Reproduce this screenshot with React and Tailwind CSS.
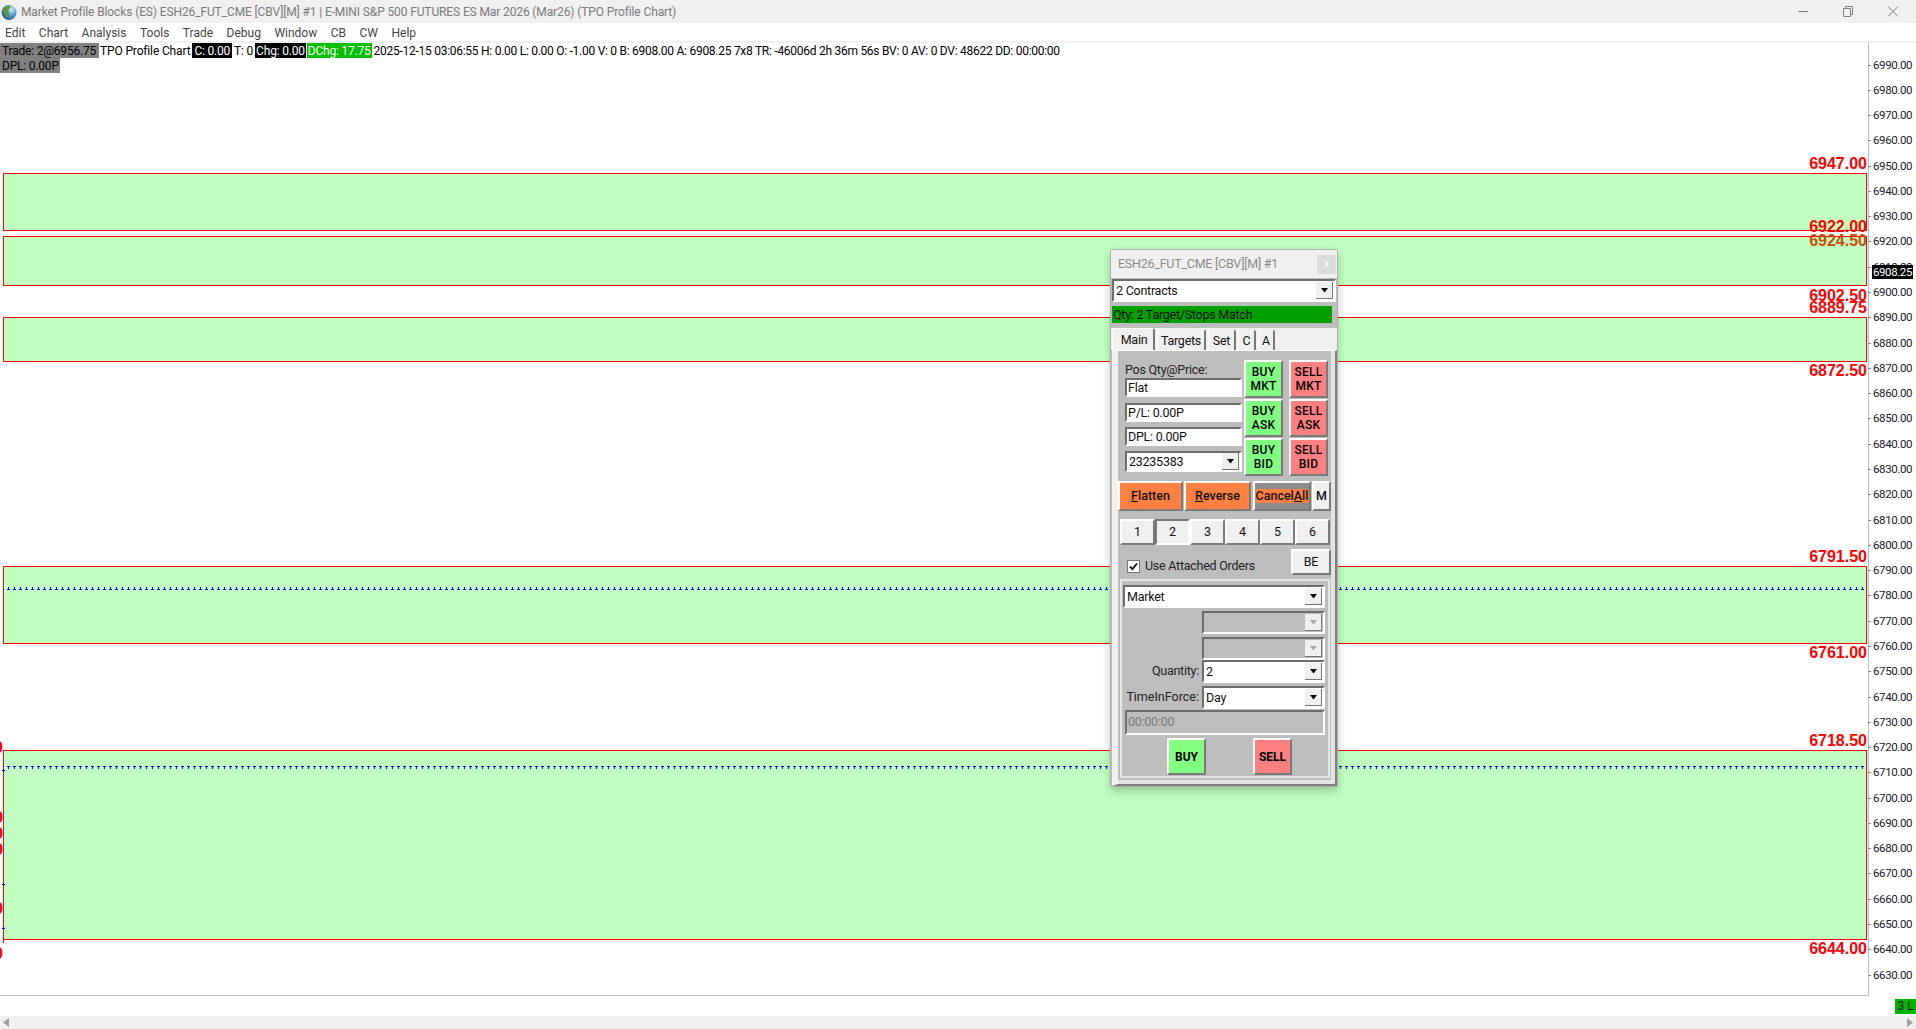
import { Fragment } from 'react'

const menus = ['Edit', 'Chart', 'Analysis', 'Tools', 'Trade', 'Debug', 'Window', 'CB', 'CW', 'Help']

const zones = [
  [173, 230],
  [236, 285],
  [317, 361],
  [566, 643],
  [750, 939],
]

const priceLabels = [
  ['6947.00', 163, '#ff0000'],
  ['6924.50', 239.5, '#c8500c'],
  ['6922.00', 226, '#ff0000'],
  ['6902.50', 294.5, '#ff0000'],
  ['6889.75', 307, '#ff0000'],
  ['6872.50', 370, '#ff0000'],
  ['6791.50', 556, '#ff0000'],
  ['6761.00', 652, '#ff0000'],
  ['6718.50', 740, '#ff0000'],
  ['6644.00', 948, '#ff0000'],
]

const clippedLabels = [747, 817, 833, 849, 908, 953]

const axisTicks = Array.from({ length: 37 }, (_, i) => ({
  label: (6990 - i * 10).toFixed(2),
  y: 64.5 + i * 25.28,
}))

const raised = 'border-2 border-t-white border-l-white border-r-[#7a7a7a] border-b-[#7a7a7a]'
const sunken = 'border-2 border-t-[#6e6e6e] border-l-[#6e6e6e] border-r-white border-b-white'
const uiFont = "font-['Roboto',sans-serif]"

function TradeButton({ top, bottom, color }) {
  return (
    <button className={`${raised} ${color} h-[38px] w-[39px] flex flex-col items-center justify-center text-[12px] leading-[14px] font-medium text-black tracking-[0.2px]`}>
      <span>{top}</span>
      <span>{bottom}</span>
    </button>
  )
}

function Field({ children, className = '' }) {
  return (
    <div className={`${sunken} bg-white flex items-center pl-[1px] pt-[1px] text-[#111] ${className}`}>
      {children}
    </div>
  )
}

function Arrow({ disabled }) {
  return (
    <span className="w-[17px] h-[17px] bg-[#f0f0f0] border-r border-b border-[#777] shrink-0 flex items-center justify-center">
      <svg width="9" height="5" viewBox="0 0 9 5">
        <path d="M1 0h7L4.500 4.500z" fill={disabled ? '#a8a8a8' : '#000'} />
      </svg>
    </span>
  )
}

function Combo({ value, className = '', disabled }) {
  return (
    <div className={`${sunken} ${disabled ? 'bg-[#bdbdbd]' : 'bg-white'} flex items-center justify-between pl-[2px] pr-[1px] text-[#111] ${className}`}>
      <span className="pt-[2px]">{value}</span>
      <Arrow disabled={disabled} />
    </div>
  )
}

function TradeWindow() {
  return (
    <div className={`${uiFont} absolute left-[1110px] top-[249px] w-[228px] h-[538px] rounded-[2px] border border-[#b0b0b0] bg-[#bdbdbd] flex flex-col text-[12.5px] tracking-[-0.25px] shadow-[0_4px_10px_rgba(0,0,0,0.22)]`}>
      <div className="h-[28px] bg-[#f0f0f0] flex items-center justify-between pl-[7px] pr-[1px] shrink-0">
        <span className="text-[#8a8a8a]">ESH26_FUT_CME [CBV][M] #1</span>
        <span className="w-[19px] h-[19px] bg-[#dcdcdc] text-white text-[11px] flex items-center justify-center">x</span>
      </div>

      <Combo value="2 Contracts" className="ml-[1px] mt-[1px] w-[224px] h-[23px] shrink-0" />
      <div className="ml-[1px] mt-[4px] w-[220px] h-[17px] bg-[#00a000] text-[#0a0a0a] flex items-center pl-[1px] pt-[1px] shrink-0">
        Qty: 2 Target/Stops Match
      </div>

      <div className="mt-[5px] h-[22px] bg-[#f0f0f0] flex items-end pl-[1px] gap-[2px] text-[#111] shrink-0">
        <span className="w-[43px] h-[22px] rounded-t-[2px] bg-[#f0f0f0] border-t border-l border-white border-r-2 border-r-[#777] flex items-start justify-center pt-[2px] pl-[2px] relative z-10">Main</span>
        <span className="w-[49px] h-[20px] rounded-t-[2px] bg-[#f0f0f0] border-r-2 border-r-[#777] border-l border-l-white flex items-center justify-center pt-[2px]">Targets</span>
        <span className="w-[28px] h-[20px] rounded-t-[2px] bg-[#f0f0f0] border-r-2 border-r-[#777] border-l border-l-white flex items-center justify-center pt-[2px]">Set</span>
        <span className="w-[18px] h-[20px] rounded-t-[2px] bg-[#f0f0f0] border-r-2 border-r-[#777] border-l border-l-white flex items-center justify-center pt-[2px]">C</span>
        <span className="w-[17px] h-[20px] rounded-t-[2px] bg-[#f0f0f0] border-r-2 border-r-[#777] border-l border-l-white flex items-center justify-center pt-[2px]">A</span>
      </div>

      <div className="ml-[1px] w-[225px] h-[436px] border-l-[6px] border-t border-l-[#f0f0f0] border-t-white border-r-2 border-r-[#7e7e7e] border-b-2 border-b-[#7e7e7e] shadow-[inset_-4px_-4px_0_#e4e4e4] flex flex-col text-[#111]">
        <div className="flex mt-[9px] ml-[7px]">
          <div className="w-[117px] flex flex-col">
            <span className="h-[18px] leading-[20px] text-[#222]">Pos Qty@Price:</span>
            <Field className="h-[19px]">Flat</Field>
            <Field className="h-[19px] mt-[6px]">P/L: 0.00P</Field>
            <Field className="h-[19px] mt-[5px]">DPL: 0.00P</Field>
            <Combo value="23235383" className="h-[21px] mt-[5px]" />
          </div>
          <div className="ml-[2px] flex flex-col gap-[1px]">
            <TradeButton top="BUY" bottom="MKT" color="bg-[#80ff80]" />
            <TradeButton top="BUY" bottom="ASK" color="bg-[#80ff80]" />
            <TradeButton top="BUY" bottom="BID" color="bg-[#80ff80]" />
          </div>
          <div className="ml-[6px] flex flex-col gap-[1px]">
            <TradeButton top="SELL" bottom="MKT" color="bg-[#ff8080]" />
            <TradeButton top="SELL" bottom="ASK" color="bg-[#ff8080]" />
            <TradeButton top="SELL" bottom="BID" color="bg-[#ff8080]" />
          </div>
        </div>

        <div className="mt-[5px] h-[30px] flex text-[12.5px] tracking-normal font-medium text-[#111]">
          <button className={`${raised} w-[65px] bg-[#ff8040]`}><u>F</u>latten</button>
          <button className={`${raised} w-[67px] ml-[1px] bg-[#ff8040]`}><u>R</u>everse</button>
          <button className="ml-[2px] w-[58px] bg-[#8c8c8c] border-2 border-t-white border-l-white border-r-[#7a7a7a] border-b-[#7a7a7a] flex items-center justify-center">
            <span className="bg-[#ff8040] px-[1px] leading-[14px]">Cancel<u>A</u>ll</span>
          </button>
          <button className={`${raised} w-[19px] ml-[1px] bg-[#f0f0f0]`}>M</button>
        </div>

        <div className="mt-[8px] ml-[2px] w-[210px] h-[26px] grid grid-cols-6">
          {['1', '2', '3', '4', '5', '6'].map((n) => (
            <button
              key={n}
              className={
                n === '2'
                  ? 'bg-[#f0f0f0] border-2 border-t-[#777] border-l-[#777] border-r-white border-b-white'
                  : `${raised} bg-[#f0f0f0]`
              }
            >
              {n}
            </button>
          ))}
        </div>

        <div className="mt-[4px] h-[26px] flex items-center ml-[9px]">
          <span className="w-[13px] h-[13px] bg-white border border-[#777] flex items-center justify-center mt-[8px]">
            <svg width="9" height="9" viewBox="0 0 9 9">
              <path d="M1 4.500l2.400 2.600L8 1.500" fill="none" stroke="#000" strokeWidth="1.700" />
            </svg>
          </span>
          <span className="ml-[5px] mt-[8px] text-[#222]">Use Attached Orders</span>
          <button className={`${raised} ml-auto mr-[4px] w-[40px] h-[26px] shrink-0 pt-[1px] bg-[#f0f0f0]`}>BE</button>
        </div>

        <div className="mt-[4px] ml-[2px] w-[210px] h-[199px] border-2 border-[#e6e6e6] flex flex-col">
          <Combo value="Market" className="mt-[4px] ml-[1px] w-[202px] h-[23px] shrink-0" />
          <Combo disabled value="" className="mt-[3px] ml-[80px] w-[123px] h-[23px] shrink-0" />
          <Combo disabled value="" className="mt-[3px] ml-[80px] w-[123px] h-[23px] shrink-0" />
          <div className="flex items-center h-[23px] shrink-0">
            <span className="w-[77px] text-right text-[#222]">Quantity:</span>
            <Combo value="2" className="ml-[3px] w-[123px] h-[23px]" />
          </div>
          <div className="mt-[3px] flex items-center h-[23px] shrink-0">
            <span className="w-[77px] text-right text-[#222] tracking-normal">TimeInForce:</span>
            <Combo value="Day" className="ml-[3px] w-[123px] h-[23px]" />
          </div>
          <div className={`${sunken} mt-[1px] ml-[3px] w-[200px] h-[25px] shrink-0 flex items-center pl-[1px] text-[#7a7a7a]`}>00:00:00</div>
          <div className="mt-[3px] flex text-[12px] tracking-normal font-bold text-black">
            <button className={`${raised} ml-[45px] w-[39px] h-[37px] bg-[#80ff80]`}>BUY</button>
            <button className={`${raised} ml-[47px] w-[39px] h-[37px] bg-[#ff8080]`}>SELL</button>
          </div>
        </div>
      </div>
    </div>
  )
}

function ChartDrawing() {
  return (
    <svg className="absolute inset-0 font-['Liberation_Sans',sans-serif]" width="1916" height="986" viewBox="0 43 1916 986">
      <defs>
        <pattern id="tpoDots" x="1" y="0" width="6" height="3" patternUnits="userSpaceOnUse">
          <path d="M0 1h3v1H0zM1 0h1v3H1z" fill="#0000ff" />
        </pattern>
      </defs>

      {clippedLabels.map((y) => (
        <text key={y} x="3" y={y + 6} textAnchor="end" fontSize="16" fontWeight="700" fill="#ff0000">00</text>
      ))}

      {zones.map(([top, bottom]) => (
        <rect key={top} x="3.500" y={top + 0.5} width="1863" height={bottom - top} fill="#c0ffc0" stroke="#ff0000" />
      ))}

      {priceLabels.map(([text, y, color]) => (
        <text key={text} x="1867" y={y + 6} textAnchor="end" fontSize="16" fontWeight="700" fill={color}>{text}</text>
      ))}

      <path d="M3.500 750v193" stroke="#ff0000" fill="none" />
      <rect x="3" y="587" width="1864" height="3" fill="url(#tpoDots)" />
      <rect x="3" y="766" width="1864" height="3" fill="url(#tpoDots)" />
      <path d="M2 770.500h3M3.500 769v3M2 884.500h3M3.500 883v3M2 928.500h3M3.500 927v3" stroke="#0000ff" fill="none" />

      <path d="M1868.500 43v953M0 995.500h1868" stroke="#bdbdbd" fill="none" />

      {axisTicks.map(({ label, y }) => (
        <Fragment key={label}>
          <path d={`M1868 ${Math.round(y) + 0.5}h3`} stroke="#888" />
          <text x="1873" y={Math.round(y) + 3.5} fontSize="11.5" letterSpacing="-0.4" fontFamily="Roboto, sans-serif" fill="#1a1a2a">{label}</text>
        </Fragment>
      ))}
    </svg>
  )
}

export default function App() {
  return (
    <div className="relative w-[1916px] h-[1029px] overflow-hidden bg-white flex flex-col font-['Roboto',sans-serif]">
      <div className="h-[23px] bg-[#f0f0f0] flex items-center pl-[1px] shrink-0">
        <svg width="18" height="18" viewBox="0 0 18 18" className="shrink-0">
          <defs>
            <radialGradient id="globe" cx="0.65" cy="0.3" r="0.8">
              <stop offset="0" stopColor="#d8f0ff" />
              <stop offset="0.45" stopColor="#5a9ed8" />
              <stop offset="1" stopColor="#1c4a7a" />
            </radialGradient>
          </defs>
          <circle cx="8" cy="9.500" r="7.500" fill="url(#globe)" />
          <path d="M2 6c2-3 5-4 7-3 1 2-1 3-2 4 1 2 2 4 0 7-2 1-3-2-3-4-1-1-2-2-2-4z" fill="#5c9a2e" />
        </svg>
        <span className="ml-[2px] text-[12px] tracking-[-0.12px] text-[#7a7a7a] whitespace-nowrap">
          Market Profile Blocks (ES) ESH26_FUT_CME [CBV][M] #1 | E-MINI S&amp;P 500 FUTURES ES Mar 2026 (Mar26) (TPO Profile Chart)
        </span>
        <div className="ml-auto flex items-center gap-[35px] pr-[18px]">
          <svg width="10" height="11" viewBox="0 0 10 11"><path d="M0 5.500h10" stroke="#808080" /></svg>
          <svg width="10" height="11" viewBox="0 0 10 11"><path d="M0.500 2.500h7v8h-7zM2.500 2.500v-2h7v8h-2" stroke="#808080" fill="none" /></svg>
          <svg width="10" height="11" viewBox="0 0 10 11"><path d="M0 0.500l10 10M10 0.500L0 10.500" stroke="#808080" /></svg>
        </div>
      </div>

      <div className="h-[19px] flex items-center pt-[2px] pl-[5px] gap-[13.500px] text-[12px] text-[#444] shrink-0 border-b border-[#f0f0f0]">
        {menus.map((m) => <span key={m}>{m}</span>)}
      </div>
      <div className="h-[1px] bg-[#f0f0f0] shrink-0" />

      <div className="relative flex-1">
        <ChartDrawing />
        <div className="absolute left-0 top-0 flex flex-col items-start text-[12px] leading-[17px] text-black whitespace-nowrap">
          <div className="flex h-[15px]">
            <span className="bg-[#808080] pl-[2px] pr-[3px] tracking-[-0.2px]">Trade: 2@6956.75</span>
            <span className="ml-[1px] mr-[2px] tracking-[-0.15px]">TPO Profile Chart</span>
            <span className="bg-black text-white px-[2px] tracking-[-0.2px]">C: 0.00</span>
            <span className="mx-[2px] tracking-[-0.2px]">T: 0</span>
            <span className="bg-black text-white px-[1px] tracking-[-0.2px]">Chg: 0.00</span>
            <span className="ml-[1px] bg-[#00c000] text-white px-[1px] tracking-[-0.2px]">DChg: 17.75</span>
            <span className="ml-[2px] tracking-[-0.27px]">2025-12-15 03:06:55 H: 0.00 L: 0.00 O: -1.00 V: 0 B: 6908.00 A: 6908.25 7x8 TR: -46006d 2h 36m 56s BV: 0 AV: 0 DV: 48622 DD: 00:00:00</span>
          </div>
          <span className="h-[15px] bg-[#808080] pl-[2px] pr-[1px] tracking-[-0.2px]">DPL: 0.00P</span>
        </div>
        <div className="absolute left-[1872px] top-[222px] w-[41px] h-[14px] bg-black text-white text-[11.500px] leading-[15px] tracking-[-0.4px] text-center">6908.25</div>
      </div>

      <div className="h-[20px] shrink-0 flex justify-end items-start pt-[3px]">
        <span className="w-[21px] h-[15px] bg-[#00b400] text-[12px] leading-[15px] text-center text-[#111]">3 L</span>
      </div>

      <div className="h-[13px] bg-[#f0f0f0] shrink-0 flex items-center justify-between px-[3px]">
        <svg width="7" height="9" viewBox="0 0 7 9"><path d="M6 0v9L0 4.500z" fill="#a0a0a0" /></svg>
        <svg width="7" height="9" viewBox="0 0 7 9"><path d="M1 0v9l6-4.500z" fill="#a0a0a0" /></svg>
      </div>

      <TradeWindow />
    </div>
  )
}
